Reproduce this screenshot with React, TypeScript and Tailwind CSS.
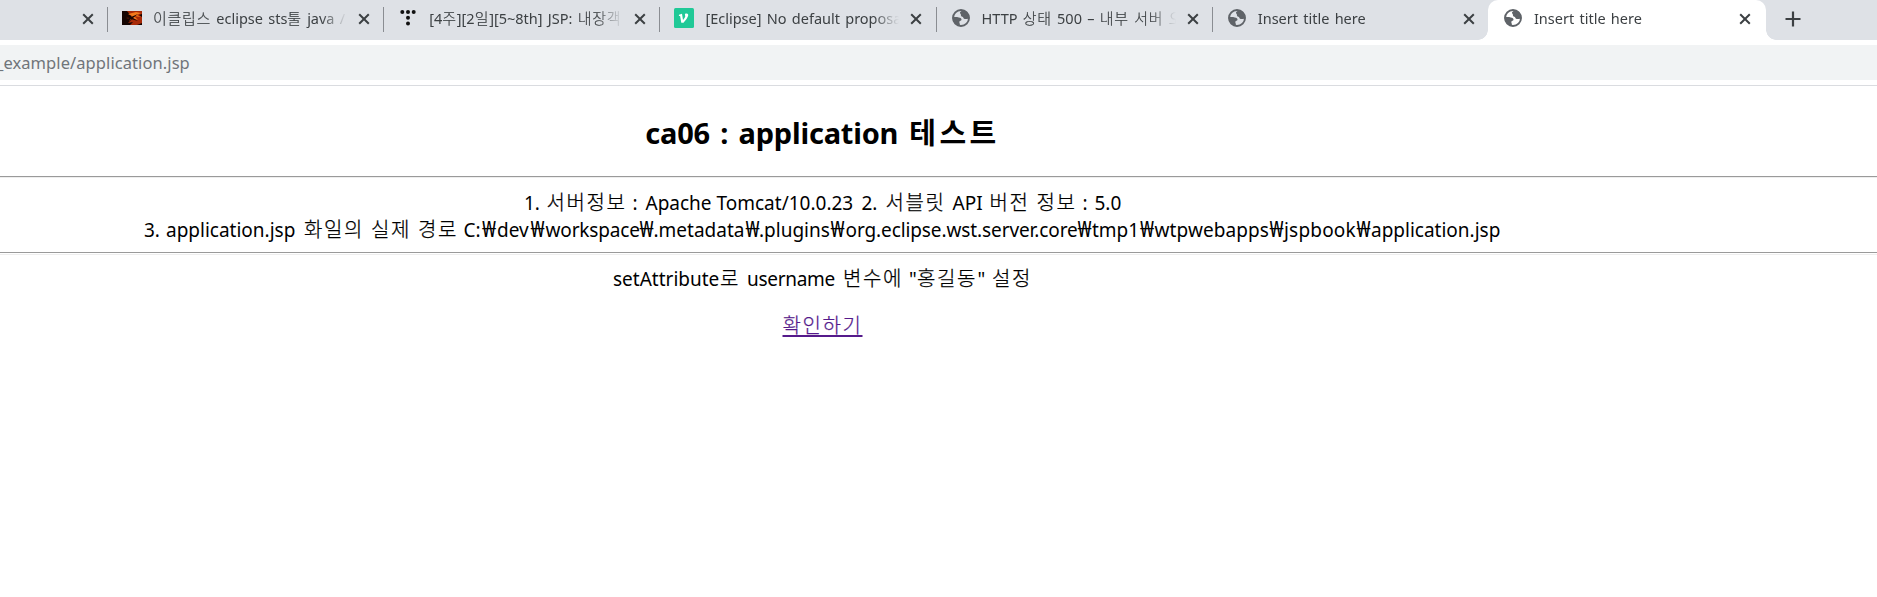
import type { ReactNode } from "react";

const HANGUL =
  "font-['Noto_Sans_CJK_KR',sans-serif] font-light text-[20px] tracking-[1.6px] [-webkit-text-stroke:0.25px_currentColor]";

function Run({ w, ko, children }: { w: string; ko?: boolean; children: ReactNode }) {
  return <span className={`shrink-0 whitespace-pre ${w} ${ko ? HANGUL : ""}`}>{children}</span>;
}

function Won({ w }: { w: string }) {
  return <span className={`shrink-0 text-[21px] ${w}`}>₩</span>;
}

function Line({ className = "", children }: { className?: string; children: ReactNode }) {
  return <p className={`flex h-[27px] items-baseline justify-center text-[19px] leading-[27px] ${className}`}>{children}</p>;
}

function Rule({ tall }: { tall?: boolean }) {
  return (
    <div className={`border-t border-t-[#9a9a9a] border-b border-b-[#eeeeee] ${tall ? "h-[3px]" : "h-0.5"}`} />
  );
}

function CloseIcon() {
  return (
    <svg viewBox="0 0 12 12" className="size-3 shrink-0" fill="none" stroke="#3c4043" strokeWidth="2">
      <path d="M1.2 1.2 10.8 10.8M10.8 1.2 1.2 10.8" />
    </svg>
  );
}

function Globe() {
  return (
    <svg viewBox="0 0 18 18" className="mx-px size-[18px] shrink-0">
      <circle cx="9" cy="9" r="8" fill="none" stroke="#5f6368" strokeWidth="1.9" />
      <path
        fill="#5f6368"
        d="M11 1c-.4 1-2.200 1.100-2.900 2.200-.7 1.300.9 1.200.8 2.600 0 1 .3 1.800 1.400 1.900 1.200.1.800 2 2.300 2.200 1.500.2 2.700-.4 4.500-.2C17.700 5.300 15 1.800 11 1ZM.9 8.300c1.700-.3 4.200-.2 5.900.1 1.800.3 2.900 1 2.700 2.300-.2 1.300-2 .9-2.200 2.100-.2 1.200 1.200 2 .3 4.200C3.400 16.200.5 12.700.9 8.300Z"
      />
    </svg>
  );
}

function FireIcon() {
  return (
    <svg viewBox="0 0 20 14" className="h-3.5 w-5 shrink-0">
      <rect width="20" height="14" fill="#140502" />
      <path d="M5 0h15v3l-3 1 3 2v6l-5 2H8l3-3-5 1 4-4-6-1 6-1Z" fill="#a82a08" />
      <path d="m6 3 8-2 5 1-4 2 4 2-7-1 4 4-6-2-3 3 3-5Z" fill="#f47a1c" />
      <path d="m3 5 6 1 7-3-5 4 5 3-7-2-5 3 3-4Z" fill="#1c0602" />
    </svg>
  );
}

function DotsIcon() {
  return (
    <svg viewBox="0 0 20 20" className="size-5 shrink-0" fill="#111">
      <circle cx="4.3" cy="4" r="2" />
      <circle cx="10" cy="4" r="2" />
      <circle cx="15.7" cy="4" r="2" />
      <circle cx="10" cy="9.7" r="2" />
      <circle cx="10" cy="15.4" r="2" />
    </svg>
  );
}

function VelogIcon() {
  return (
    <svg viewBox="0 0 20 20" className="size-5 shrink-0">
      <rect width="20" height="20" rx="1.5" fill="#20c997" />
      <path
        d="M5 6.7 8 5.8l1 6.200c1.800-2.200 2.700-3.600 2.100-4.600-.3-.6-.3-1.400.7-1.800 1.400-.5 2.700.4 2.400 2-.4 2-2.400 4.600-4.700 7.200H7.300L6.100 7.900l-1.200.1Z"
        fill="#fff"
      />
    </svg>
  );
}

function Tab({ icon, active, children }: { icon: ReactNode; active?: boolean; children: ReactNode }) {
  return (
    <div
      className={`relative flex h-10 shrink-0 items-center pb-1 ${active ? "w-[278px] rounded-t-[10px] bg-white" : "w-[276.2px]"}`}
    >
      {active && (
        <>
          <span className="absolute bottom-0 -left-2.5 size-2.5 bg-[radial-gradient(circle_at_0_0,transparent_9.5px,#fff_10px)]" />
          <span className="absolute -right-2.5 bottom-0 size-2.5 bg-[radial-gradient(circle_at_100%_0,transparent_9.5px,#fff_10px)]" />
        </>
      )}
      <div className={`mt-0.5 mr-[14px] h-[25px] w-px ${active ? "" : "bg-[#8a8d92]"}`} />
      {icon}
      <div className="ml-[11px] w-[195px] overflow-hidden text-[14.5px] leading-6 whitespace-pre text-[#3c4043] [mask-image:linear-gradient(to_right,#000_168px,transparent_194px)] [word-spacing:1.5px]">
        {children}
      </div>
      <div className="mt-px ml-[10px] flex">
        <CloseIcon />
      </div>
    </div>
  );
}

function Ko({ children }: { children: ReactNode }) {
  return (
    <span className="font-['Noto_Sans_CJK_KR',sans-serif] text-[15px] font-light tracking-[0.7px] [-webkit-text-stroke:0.2px_currentColor]">
      {children}
    </span>
  );
}

export default function App() {
  return (
    <div className="h-[597px] w-full overflow-hidden bg-white font-['Noto_Sans','Noto_Sans_CJK_KR',sans-serif] text-black">
      <header>
        <div className="flex h-10 bg-[#dee1e6]">
          <div className="flex w-[107px] shrink-0 items-center justify-end pr-[13px] pb-[3px]">
            <CloseIcon />
          </div>
          <Tab icon={<FireIcon />}>
            <Ko>이클립스</Ko> eclipse sts<Ko>툴</Ko> java /
          </Tab>
          <Tab icon={<DotsIcon />}>
            [4<Ko>주</Ko>][2<Ko>일</Ko>][5~8th] JSP: <Ko>내장객</Ko>
          </Tab>
          <Tab icon={<VelogIcon />}>[Eclipse] No default proposal</Tab>
          <Tab icon={<Globe />}>
            HTTP <Ko>상태</Ko> 500 – <Ko>내부 서버 오</Ko>
          </Tab>
          <Tab icon={<Globe />}>Insert title here</Tab>
          <Tab icon={<Globe />} active>
            Insert title here
          </Tab>
          <div className="flex flex-1 items-center pb-[3px] pl-[19px]">
            <svg viewBox="0 0 16 16" className="size-4" stroke="#3c4043" strokeWidth="2.2">
              <path d="M8 .5v15M.5 8h15" />
            </svg>
          </div>
        </div>
        <div className="mt-[5px] h-[35px] bg-[#f1f3f4] text-[16.5px] leading-[35px] tracking-[0.08px] text-[#70757a]">
          <span className="-ml-1">_example/application.jsp</span>
        </div>
        <div className="mt-[5px] h-px bg-[#dadce0]" />
      </header>

      <main>
        <h2 className="mt-[25px] flex h-10 w-[1645px] items-baseline justify-center text-[29px] leading-10 font-bold">
          <span className="w-[264px] tracking-[-0.2px] [word-spacing:3px]">ca06 : application</span>
          <span className="font-['Noto_Sans_CJK_KR',sans-serif] tracking-[3.5px]">테스트</span>
        </h2>
        <div className="mt-[25px]">
          <Rule />
        </div>
        <div className="mt-[10px] w-[1645px]">
          <Line>
            <Run w="w-[22.5px]">1.</Run>
            <Run w="w-[86px]" ko>서버정보</Run>
            <Run w="w-[13px]">:</Run>
            <Run w="w-[216px]">Apache Tomcat/10.0.23</Run>
            <Run w="w-[24px]">2.</Run>
            <Run w="w-[67px]" ko>서블릿</Run>
            <Run w="w-[37px]">API</Run>
            <Run w="w-[47px]" ko>버전</Run>
            <Run w="w-[46px]" ko>정보</Run>
            <Run w="w-[12px]">:</Run>
            <Run w="w-[26.5px]">5.0</Run>
          </Line>
          <Line>
            <Run w="w-[22px]">3.</Run>
            <Run w="w-[138px]">application.jsp</Run>
            <Run w="w-[67px]" ko>화일의</Run>
            <Run w="w-[47px]" ko>실제</Run>
            <Run w="w-[45.5px]" ko>경로</Run>
            <Run w="w-[18.5px]">C:</Run>
            <Won w="w-[15px]" />
            <Run w="w-[33.5px]">dev</Run>
            <Won w="w-[15px]" />
            <Run w="w-[94px] tracking-[-0.15px]">workspace</Run>
            <Won w="w-[14px]" />
            <Run w="w-[92px]">.metadata</Run>
            <Won w="w-[13.5px]" />
            <Run w="w-[71.5px]">.plugins</Run>
            <Won w="w-[15px]" />
            <Run w="w-[232px] tracking-[-0.1px]">org.eclipse.wst.server.core</Run>
            <Won w="w-[14.5px]" />
            <Run w="w-[48px]">tmp1</Run>
            <Won w="w-[14.5px]" />
            <Run w="w-[115px] tracking-[0.1px]">wtpwebapps</Run>
            <Won w="w-[14.5px]" />
            <Run w="w-[72.5px] tracking-[0.2px]">jspbook</Run>
            <Won w="w-[14.5px]" />
            <Run w="w-[130px]">application.jsp</Run>
          </Line>
        </div>
        <div className="mt-[10px]">
          <Rule tall />
        </div>
        <div className="mt-[9px] w-[1645px]">
          <Line>
            <Run w="w-[107px]">setAttribute</Run>
            <Run w="w-[27px]" ko>로</Run>
            <Run w="w-[96px] tracking-[-0.3px]">username</Run>
            <Run w="w-[66px]" ko>변수에</Run>
            <Run w="w-[8px]">"</Run>
            <Run w="w-[60.5px]" ko>홍길동</Run>
            <Run w="w-[14.5px]">"</Run>
            <Run w="w-[40px]" ko>설정</Run>
          </Line>
          <Line className="mt-5">
            <a href="#" className={`${HANGUL} text-[#551a8b] underline decoration-2 underline-offset-[2px]`}>
              확인하기
            </a>
          </Line>
        </div>
      </main>
    </div>
  );
}
